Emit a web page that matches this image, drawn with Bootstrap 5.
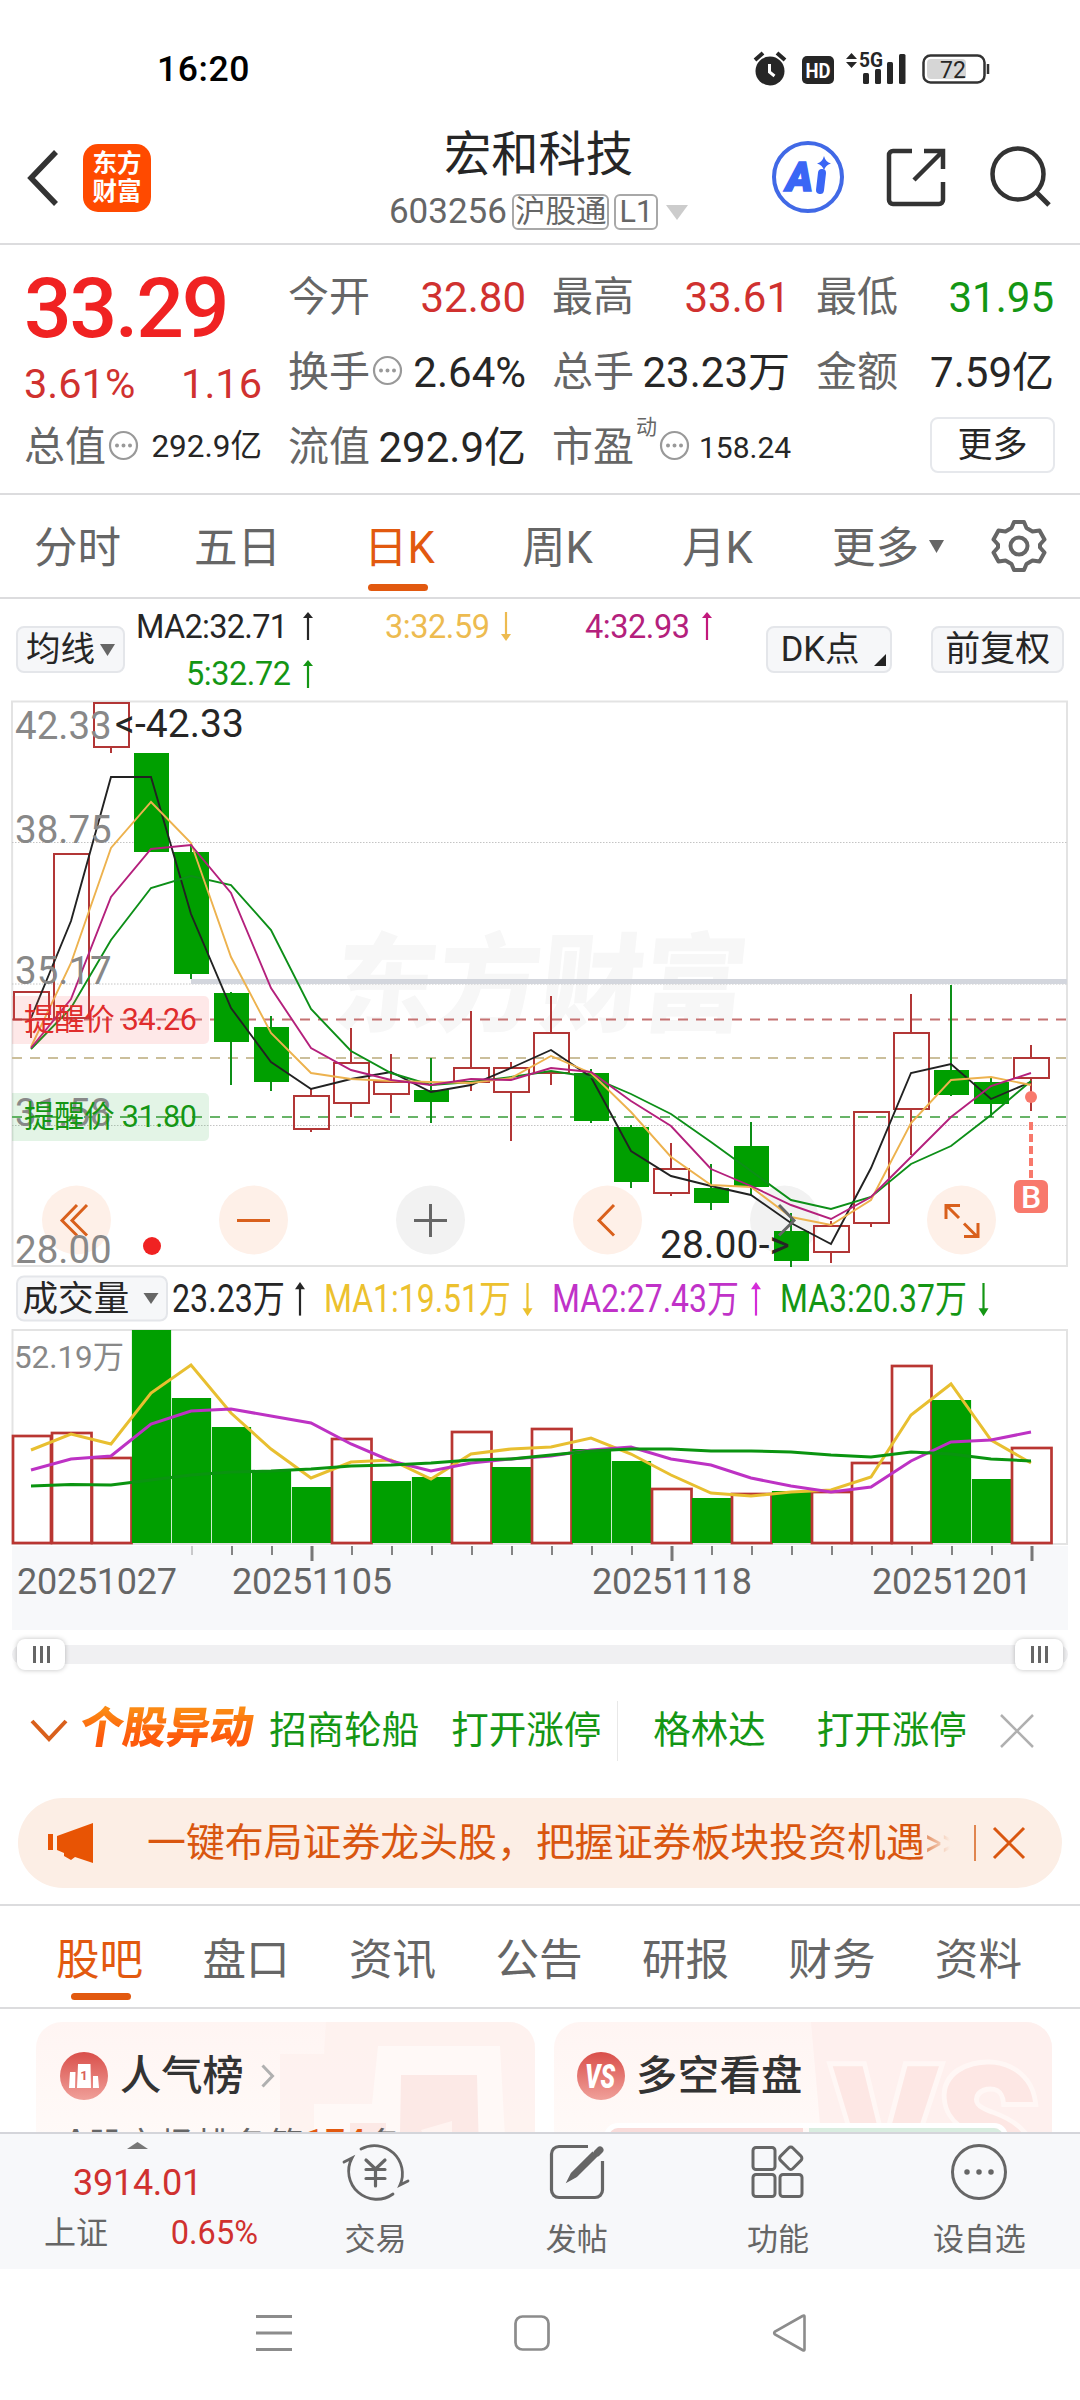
<!DOCTYPE html>
<html lang="zh-CN">
<head>
<meta charset="utf-8">
<meta name="viewport" content="width=1080">
<title>宏和科技 603256</title>
<link href="https://cdn.jsdelivr.net/npm/bootstrap@5.3.0/dist/css/bootstrap.min.css" rel="stylesheet">
<style>
body{width:1080px;height:2400px;margin:0;overflow:hidden;background:#fff;color:#262626;font-family:Roboto,"Noto Sans CJK SC",sans-serif;line-height:1;font-size:35px}
svg{display:block;flex:none;overflow:visible}
svg text{font-family:Roboto,"Noto Sans CJK SC",sans-serif}
.nw,.nw *{white-space:nowrap}
.up{color:#d0312f}.down{color:#149614}.dim{color:#666}.hot{color:#e2590f}
.statusbar{height:124px;padding:15px 92px 0 157px}
.clock{font-size:35.5px;font-weight:500;color:#000;letter-spacing:.6px}
.apphead{height:121px;border-bottom:2px solid #dcdcde;padding:0 29px 0 27px}
.brand{width:68px;height:68px;border-radius:15px;background:#ff4a00;color:#fff;font-weight:700;font-size:24.5px;line-height:28px;margin-left:24px;text-align:center;padding-top:6px}
.stockname{font-size:47.3px;line-height:56px;color:#262626}
.codeline{font-size:35px;line-height:38px;color:#666;height:38px}
.pilltag{border:2px solid #a8a8a8;border-radius:6px;font-size:30.5px;line-height:32px;height:36px;padding:0 1px;margin-left:5px}
.quote{height:250px;border-bottom:2px solid #dcdcde;padding:15px 24px 0}
.qgrid{display:grid;grid-template-columns:238px 238px 238px 238px;column-gap:26px;height:225px}
.cell{height:75px;font-size:42px}
.lbl{font-size:41px;color:#666}
.bigprice{font-size:84px;font-weight:500;color:#f02222;line-height:97px;height:97px;letter-spacing:-2.200px}
.morebtn{width:125px;height:56px;border:2px solid #e6e8ec;border-radius:8px;background:#fff;font-size:35px;color:#262626}
.periods{height:104px;border-bottom:2px solid #dcdcde;padding:0 34px 0 34px;font-size:43.5px;color:#666}
.periods .tabitem{position:relative;height:102px;padding-top:5px}
.bar{position:absolute;left:50%;bottom:6px;width:60px;height:7px;margin-left:-31px;border-radius:4px;background:#e2590f}
.legend{height:102px;padding:27px 16px 0 16px}
.tool{height:47px;border:2px solid #e4e6ea;border-radius:8px;background:#f6f7f9;font-size:34.5px;color:#262626}
.slider{height:39px;padding:9px 12px 0}
.track{height:31px;position:relative}
.track:before{content:"";position:absolute;left:0;right:0;top:6px;height:19px;border-radius:10px;background:#f0f0f2}
.knob{position:relative;width:48px;height:31px;background:#fff;border-radius:8px;box-shadow:0 0 5px rgba(0,0,0,.25)}
.knob i{width:3px;height:17px;background:#666}
.news{height:129px;padding:0 46px 6px 30px;font-size:37.5px}
.newslogo{font-size:43.5px;font-weight:900;transform:skewX(-9deg);background:linear-gradient(#fb8a14 15%,#fd5a0c 65%);-webkit-background-clip:text;color:transparent;line-height:54px;letter-spacing:-.2px}
.promo{height:90px;margin:0 18px;border-radius:45px;background:#fceee5;padding:0 32px 0 30px;color:#d9560f;font-size:38.9px}
.promotext{width:815px;margin-left:53px;line-height:60px}
.fadeout{background:linear-gradient(90deg,#e28b5c,#fceee5 85%);-webkit-background-clip:text;color:transparent;display:inline-block;transform:scaleX(.82);transform-origin:left;width:36px}
.sections{height:105px;margin-top:16px;border-top:2px solid #dcdcde;border-bottom:2px solid #dcdcde;padding:0 58px 0 56px;font-size:43.6px;color:#666}
.sections .tabitem{position:relative;height:101px;padding-top:8px}
.cards{height:123px;overflow:hidden;padding:13px 28px 0 36px;gap:19px}
.tile{height:170px;border-radius:26px;background:linear-gradient(#fff5f3,#fffaf8 70%);position:relative;overflow:hidden;flex:none;width:499px}
.tile>svg.art{position:absolute;left:0;top:0}
.tilehead{position:relative;height:108px;padding-left:24px;font-size:41.3px;font-weight:500;color:#333}
.tilehead span{padding-top:2px}
.rankline{position:relative;margin-top:-5px;padding-left:28px;font-size:35px;line-height:44px;color:#666;letter-spacing:1px}
.rankline b,.rankline span{position:relative;top:-4px;font-weight:500}
.battle{position:relative;height:20px;margin:-7px 44px 0 50px;border:5px solid #fff;border-radius:14px 14px 0 0;display:flex;gap:6px;overflow:hidden}
.bottombar{height:137px;background:#f7f8fa;border-top:2px solid #d4d5da;font-size:31px;color:#666}
.bottombar .act{width:201.3px;padding-top:9px}
.sysnav{height:131px;padding-bottom:3px}
</style>
<script src="https://cdn.jsdelivr.net/npm/bootstrap@5.3.0/dist/js/bootstrap.bundle.min.js"></script>
</head>
<body class="nw">

<div class="statusbar d-flex align-items-center justify-content-between">
  <span class="clock">16:20</span>
  <svg width="236" height="40" viewBox="752 50 236 40">
    <g fill="#262626">
      <circle cx="770" cy="71" r="14.5"/><path d="M755 60l8-7M785 60l-8-7" stroke="#262626" stroke-width="4" fill="none"/>
      <path d="M769.5 64v8l5 4" stroke="#fff" stroke-width="3" fill="none"/>
      <rect x="802" y="56" width="32" height="28" rx="5"/>
      <text x="818" y="78" font-size="20" font-weight="700" fill="#fff" text-anchor="middle" textLength="25" lengthAdjust="spacingAndGlyphs">HD</text>
      <path d="M846 59l5.5-6 5.5 6zM846 62l5.5 6 5.5-6z"/>
      <text x="859" y="67" font-size="19.5" font-weight="700" textLength="24" lengthAdjust="spacingAndGlyphs">5G</text>
      <rect x="863" y="73" width="6" height="11" rx="1.5"/><rect x="875" y="69" width="6" height="15" rx="1.5"/><rect x="887" y="62" width="6" height="22" rx="1.5"/><rect x="899" y="54" width="6.5" height="30" rx="1.5"/>
      <rect x="923.5" y="55.500" width="61" height="27" rx="7" fill="#fff" stroke="#333" stroke-width="2.500"/><rect x="927" y="59" width="39" height="20" rx="4" fill="#d6d6d6"/><path d="M988 64v10" stroke="#333" stroke-width="2.500"/>
      <text x="953" y="77.500" font-size="23" text-anchor="middle">72</text>
    </g>
  </svg>
</div>

<div class="apphead d-flex align-items-start position-relative">
  <div class="d-flex align-items-center" style="padding-top:20px">
    <svg width="32" height="56" viewBox="0 0 32 56"><path d="M29 2L4 28l25 26" fill="none" stroke="#333" stroke-width="5.500"/></svg>
    <div class="brand">东方<br>财富</div>
  </div>
  <div class="flex-grow-1 d-flex flex-column align-items-center" style="padding:3px 0 0 0;margin-left:155px">
    <div class="stockname">宏和科技</div>
    <div class="codeline d-flex align-items-center" style="margin-top:10px"><span>603256</span><span class="pilltag">沪股通</span><span class="pilltag" style="padding:0 3px">L1</span>
      <svg class="ms-2" width="22" height="15" viewBox="0 0 22 15"><path d="M0 0h22L11 15z" fill="#ccc"/></svg></div>
  </div>
  <svg width="280" height="76" viewBox="771 139 280 76" style="padding:0;margin-top:15px" fill="none">
    <circle cx="808" cy="177" r="34" stroke="#4169e6" stroke-width="4"/>
    <text x="786" y="191" font-size="40" font-weight="900" font-style="italic" fill="#3a66f5" textLength="27" lengthAdjust="spacingAndGlyphs" stroke="#3a66f5" stroke-width="1.500">A</text>
    <path d="M822 173l-2 17" stroke="#3a66f5" stroke-width="8" stroke-linecap="round"/>
    <path d="M824 156q1.500 6 7 7.500-5.500 1.500-7 7-1.500-5.500-7-7 5.500-1.500 7-7.500z" fill="#3a66f5"/>
    <path d="M912 151h-19a4 4 0 0 0-4 4v45a4 4 0 0 0 4 4h46a4 4 0 0 0 4-4v-18M924 151h19v18M943 151l-29 29" stroke="#333" stroke-width="4.500"/>
    <circle cx="1018" cy="174" r="25.500" stroke="#333" stroke-width="4.500"/><path d="M1036 192l13 13" stroke="#333" stroke-width="5"/>
  </svg>
</div>

<div class="quote">
  <div class="qgrid">
    <div>
      <div class="bigprice">33.29</div>
      <div class="up d-flex justify-content-between align-items-center" style="height:54px;font-size:41.500px"><span>3.61%</span><span>1.16</span></div>
      <div class="d-flex align-items-center" style="height:72px"><span class="lbl">总值</span><svg class="mb-1" style="margin-left:2px" width="31" height="31" viewBox="0 0 31 31"><use href="#more3"/></svg><span class="ms-auto" style="font-size:31.500px">292.9亿</span></div>
    </div>
    <div>
      <div class="cell d-flex align-items-center justify-content-between"><span class="lbl">今开</span><span class="up">32.80</span></div>
      <div class="cell d-flex align-items-center"><span class="lbl">换手</span><svg class="mb-1" style="margin-left:2px" width="31" height="31" viewBox="0 0 31 31"><use href="#more3"/></svg><span class="ms-auto">2.64%</span></div>
      <div class="cell d-flex align-items-center justify-content-between"><span class="lbl">流值</span><span>292.9亿</span></div>
    </div>
    <div>
      <div class="cell d-flex align-items-center justify-content-between"><span class="lbl">最高</span><span class="up">33.61</span></div>
      <div class="cell d-flex align-items-center justify-content-between"><span class="lbl">总手</span><span>23.23万</span></div>
      <div class="cell d-flex align-items-center"><span class="lbl">市盈</span><span class="dim align-self-start" style="font-size:21px;padding-top:7px;margin-left:2px">动</span><svg class="mb-1" style="margin-left:2px" width="31" height="31" viewBox="0 0 31 31"><use href="#more3"/></svg><span style="font-size:30px;margin-left:9px">158.24</span></div>
    </div>
    <div>
      <div class="cell d-flex align-items-center justify-content-between"><span class="lbl">最低</span><span class="down">31.95</span></div>
      <div class="cell d-flex align-items-center justify-content-between"><span class="lbl">金额</span><span>7.59亿</span></div>
      <div class="cell d-flex align-items-center justify-content-end"><button class="morebtn p-0" style="margin:-5px -1px 0 0">更多</button></div>
    </div>
  </div>
</div>

<div class="periods d-flex align-items-center">
  <div class="tabitem d-flex align-items-center" style="width:160px">分时</div>
  <div class="tabitem d-flex align-items-center" style="width:170px">五日</div>
  <div style="width:158px"><div class="tabitem hot d-inline-flex align-items-center">日K<span class="bar"></span></div></div>
  <div class="tabitem d-flex align-items-center" style="width:160px">周K</div>
  <div class="tabitem d-flex align-items-center" style="width:150px">月K</div>
  <div class="tabitem d-flex align-items-center flex-grow-1">更多<svg style="margin:-5px 0 0 10px" width="15" height="13" viewBox="0 0 15 13"><path d="M0 0h15L7.500 13z" fill="#666"/></svg></div>
  <svg width="54" height="54" viewBox="-27 -27 54 54" fill="none" stroke="#666" stroke-width="4"><path d="M-5 -24h10l2.500 6 6 3.500 7-1 5 9-4.500 5v3l4.500 5-5 9-7-1-6 3.500-2.500 6h-10l-2.500-6-6-3.500-7 1-5-9 4.500-5v-3l-4.500-5 5-9 7 1 6-3.500z" stroke-linejoin="round"/><circle r="8.500"/></svg>
</div>

<div class="legend d-flex">
  <button class="tool d-flex align-items-center p-0" style="width:109px;padding-left:8px!important">均线<svg style="margin-left:5px" width="15" height="12" viewBox="0 0 15 12"><path d="M0 0h15L7.500 12z" fill="#666"/></svg></button>
  <svg width="641" height="74" viewBox="125 626 641 74" font-size="32.500">
    <text x="136" y="637.500" fill="#262626" textLength="152">MA2:32.71</text><use href="#arrUp" x="308" y="612" color="#262626"/>
    <text x="385" y="637.500" fill="#edbb50" textLength="105">3:32.59</text><use href="#arrDn" x="506" y="612" color="#edbb50"/>
    <text x="585" y="637.500" fill="#b4207c" textLength="105">4:32.93</text><use href="#arrUp" x="707" y="612" color="#c2187c"/>
    <text x="186" y="685" fill="#149614" textLength="105">5:32.72</text><use href="#arrUp" x="308" y="660" color="#149614"/>
  </svg>
  <button class="tool p-0 d-flex align-items-center" style="width:127px;padding-left:13px!important">DK点<svg class="align-self-end" style="margin:0 0 5px 14px" width="12" height="12"><path d="M0 12L12 0v12z" fill="#222"/></svg></button>
  <button class="tool p-0" style="width:133px;margin-left:39px;font-size:35px">前复权</button>
</div>

<svg id="chart" width="1080" height="929" viewBox="0 701 1080 929">
  <defs>
    <g id="more3" fill="none" stroke="#999" stroke-width="2.200"><circle cx="15.500" cy="15.500" r="13.500"/><path d="M9 15.500h0M15.500 15.500h0M22 15.500h0" stroke-width="4" stroke-linecap="round"/></g>
    <g id="arrUp"><path d="M0 28V5" stroke="currentColor" stroke-width="2.200"/><path d="M-5 6L0 0l5 6z" fill="currentColor"/></g>
    <g id="arrDn"><path d="M0 0v23" stroke="currentColor" stroke-width="2.200"/><path d="M-5 22l5 7 5-7z" fill="currentColor"/></g>
  </defs>
  <text transform="translate(331 1023) skewX(-6)" font-size="107" font-weight="900" fill="#f7f7f7" textLength="412" lengthAdjust="spacingAndGlyphs">东方财富</text>
  <g fill="none" stroke="#e3e3e3" stroke-width="2"><path d="M12 701.500H1067V1266H12.500z"/><path d="M12.500 1330H1067V1544H12.500z"/></g>
  <path d="M12 842.500H1067M12 984H1067M12 1125.500H1067" stroke="#c4c4c4" stroke-dasharray="1.500 1.500"/>
  <path d="M191 981.500H1067" stroke="#d3d6dd" stroke-width="5"/>
  <g stroke-width="2" stroke-dasharray="10 8" fill="none"><path d="M12 1019.500H1067" stroke="#c57272"/><path d="M12 1058H1067" stroke="#cbbf9b"/><path d="M12 1117H1067" stroke="#68b468"/></g>
  <g fill="#fef0e8"><circle cx="76.500" cy="1220" r="34.500"/><circle cx="253.500" cy="1220" r="34.500"/><circle cx="607.500" cy="1220" r="34.500"/><circle cx="961.500" cy="1220" r="34.500"/></g>
  <g fill="#f2f2f2"><circle cx="430.500" cy="1220" r="34.500"/><circle cx="784.500" cy="1220" r="34.500"/></g>
  <g id="candles"></g>
  <g id="malines" fill="none" stroke-width="1.900"></g>
  <g fill="none" stroke="#d9601c" stroke-width="3"><path d="M77 1205l-15 15.500 15 15M87 1205l-15 15.500 15 15M237 1220.500h33M614 1205l-15 15.500 15 15M946 1219v-13.500h14M947 1206l12 12M964 1223.500l13 13M978 1223v13.500h-14"/></g>
  <g fill="none" stroke="#666" stroke-width="3"><path d="M414 1220.500h33M430.500 1204v33M779 1205l15 15.500-15 15"/></g>
  <circle cx="152" cy="1246" r="9" fill="#f02222"/>
  <path d="M12 996H204a5 5 0 0 1 5 5V1039a5 5 0 0 1-5 5H12z" fill="rgba(250,90,90,.14)"/>
  <path d="M12 1093H204a5 5 0 0 1 5 5V1136a5 5 0 0 1-5 5H12z" fill="rgba(40,170,60,.13)"/>
  <g font-size="38.500" fill="#888"><text x="15" y="739">42.33</text><text x="15" y="843">38.75</text><text x="15" y="984">35.17</text><text x="15" y="1126">31.58</text><text x="15" y="1263">28.00</text></g>
  <g font-size="39" fill="#262626"><text x="115" y="737" textLength="129">&lt;-42.33</text><text x="660" y="1258" textLength="130">28.00-&gt;</text></g>
  <g font-size="30.500"><text x="24" y="1030" fill="#e02c2c" textLength="173">提醒价 34.26</text><text x="24" y="1127" fill="#149614" textLength="173">提醒价 31.80</text></g>
  <g fill="#f8796c"><circle cx="1031" cy="1097" r="6"/><path d="M1031 1122v57" stroke="#f8796c" stroke-width="4" stroke-dasharray="8 4"/><rect x="1014" y="1180" width="34" height="33" rx="6"/></g>
  <text x="1031" y="1208" font-size="32" font-weight="500" fill="#fff" text-anchor="middle">B</text>

  <rect x="17" y="1276.500" width="150" height="44" rx="7" fill="#f6f7f9" stroke="#e4e6ea" stroke-width="2"/>
  <text x="22.500" y="1311" font-size="35.600" fill="#262626">成交量</text><path d="M143.500 1293h15l-7.500 11z" fill="#666"/>
  <g font-size="38"><text x="172" y="1312" fill="#262626" textLength="113" lengthAdjust="spacingAndGlyphs">23.23万</text><use href="#arrUp" transform="translate(300 1282) scale(1 1.200)" color="#262626"/>
  <text x="324" y="1312" fill="#ecc12e" textLength="187" lengthAdjust="spacingAndGlyphs">MA1:19.51万</text><use href="#arrDn" transform="translate(527.500 1283) scale(1 1.150)" color="#ecc12e"/>
  <text x="552" y="1312" fill="#c032c8" textLength="187" lengthAdjust="spacingAndGlyphs">MA2:27.43万</text><use href="#arrUp" transform="translate(756 1282) scale(1 1.200)" color="#d42cd8"/>
  <text x="780" y="1312" fill="#149614" textLength="187" lengthAdjust="spacingAndGlyphs">MA3:20.37万</text><use href="#arrDn" transform="translate(983.500 1283) scale(1 1.150)" color="#149614"/></g>
  <g id="volbars"></g>
  <g id="vollines" fill="none" stroke-width="3"></g>
  <text x="14" y="1368" font-size="32" fill="#888" textLength="110" lengthAdjust="spacingAndGlyphs">52.19万</text>
  <rect x="12" y="1546" width="1056" height="84" fill="#f7f8fa"/>
  <g id="ticks" stroke="#777"></g>
  <g font-size="36" fill="#666"><text x="17" y="1594" textLength="160">20251027</text><text x="232" y="1594" textLength="160">20251105</text><text x="592" y="1594" textLength="160">20251118</text><text x="872" y="1594" textLength="160">20251201</text></g>
</svg>

<div class="slider"><div class="track d-flex justify-content-between" style="padding:0 5px">
  <div class="knob d-flex align-items-center justify-content-center gap-1"><i></i><i></i><i></i></div>
  <div class="knob d-flex align-items-center justify-content-center gap-1"><i></i><i></i><i></i></div>
</div></div>

<div class="news d-flex align-items-center down">
  <svg width="38" height="24" viewBox="0 0 38 24"><path d="M2 2l17 18L36 2" fill="none" stroke="#d9601c" stroke-width="4"/></svg>
  <span class="newslogo" style="margin:-3px 0 0 12px">个股异动</span>
  <span style="margin-left:16px">招商轮船</span>
  <span style="margin-left:32px">打开涨停</span>
  <span style="width:1px;height:60px;background:#e8e8e8;margin:0 35px 0 16px"></span>
  <span>格林达</span>
  <span style="margin-left:51px">打开涨停</span>
  <svg class="ms-auto" width="34" height="34" viewBox="0 0 34 34"><path d="M1 1l32 32M33 1L1 33" stroke="#b0b0b0" stroke-width="2.500"/></svg>
</div>

<div class="promo d-flex align-items-center">
  <svg width="46" height="40" viewBox="48 1823 46 40" fill="#e85404"><path d="M48 1834h5v16h-5zM57 1836l36-13v40l-18-6-4 3-7-4v-3l-7-3z"/></svg>
  <div class="promotext">一键布局证券龙头股，把握证券板块投资机遇<span class="fadeout">&gt;&gt;</span></div>
  <span style="width:2px;height:36px;background:#e0854f;margin-left:12px"></span>
  <svg style="margin-left:17px" width="32" height="32" viewBox="0 0 32 32"><path d="M1 1l30 30M31 1L1 31" stroke="#d9560f" stroke-width="3"/></svg>
</div>

<div class="sections d-flex justify-content-between">
  <div class="tabitem d-flex align-items-center hot">股吧<span class="bar" style="margin-left:-29px;bottom:7px"></span></div>
  <div class="tabitem d-flex align-items-center">盘口</div><div class="tabitem d-flex align-items-center">资讯</div><div class="tabitem d-flex align-items-center">公告</div><div class="tabitem d-flex align-items-center">研报</div><div class="tabitem d-flex align-items-center">财务</div><div class="tabitem d-flex align-items-center">资料</div>
</div>

<div class="cards d-flex">
  <div class="tile">
    <svg class="art" width="499" height="170"><path d="M290 0H499V170H244V32H288z" fill="#fef0ed" opacity=".75"/><path d="M342 24H464L472 170H278V82H336z" fill="#fff9f7"/><path d="M365 53h76l3 117h-81zM314 101h36v69h-36z" fill="#fce9e6"/><path d="M385 108l31-9v30h-20z" fill="#fff4f1"/></svg>
    <div class="tilehead d-flex align-items-center">
      <svg width="48" height="48" viewBox="0 0 48 48"><defs><linearGradient id="rd" x2="0" y2="1"><stop stop-color="#d94f4a"/><stop offset="1" stop-color="#f0a09a"/></linearGradient></defs><circle cx="24" cy="24" r="24" fill="url(#rd)"/><path d="M10 20h5.500l-.5 16H9zM18 12h12.500l.5 24H17zM33 24h5l1 12h-6z" fill="#fff"/><text x="24" y="28" font-size="13" font-weight="700" fill="#d9605a" text-anchor="middle">1</text></svg>
      <span style="margin-left:12px">人气榜</span>
      <svg style="margin-left:17px" width="13" height="24" viewBox="0 0 13 24"><path d="M1.500 1.500L11.500 12l-10 10.500" fill="none" stroke="#b0b0b0" stroke-width="3"/></svg>
    </div>
    <div class="rankline"><span>A</span>股市场排名第<b class="hot">174</b>名</div>
  </div>
  <div class="tile" style="width:498px">
    <svg class="art" width="498" height="170"><path d="M257 0H498V170H272z" fill="#fef0ee"/><text transform="translate(285 165) skewX(8)" font-size="170" font-weight="900" font-style="italic" fill="#fde7e4" stroke="#fff7f5" stroke-width="10" paint-order="stroke" textLength="205" lengthAdjust="spacingAndGlyphs">VS</text></svg>
    <div class="tilehead d-flex align-items-center" style="padding-left:23px">
      <svg width="48" height="48" viewBox="0 0 48 48"><circle cx="24" cy="24" r="24" fill="url(#rd)"/><text x="23" y="36" font-size="33" font-weight="900" font-style="italic" fill="#fff" text-anchor="middle" textLength="30" lengthAdjust="spacingAndGlyphs">VS</text></svg>
      <span style="margin-left:11px;letter-spacing:.4px">多空看盘</span>
    </div>
    <div class="battle"><span style="width:194px;background:#f9dcda"></span><span class="flex-grow-1" style="background:#d9ede0"></span></div>
  </div>
</div>

<div class="bottombar d-flex">
  <div class="d-flex flex-column align-items-center up" style="width:275px;padding-top:8px">
    <svg width="21" height="7" viewBox="0 0 21 7"><path d="M0 7L10.500 0 21 7z" fill="#777"/></svg>
    <span style="font-size:36px;margin-top:15px;letter-spacing:-.3px;line-height:38px">3914.01</span>
    <div class="d-flex justify-content-between w-100" style="padding:11px 17px 0 44px;line-height:40px"><span class="dim" style="font-size:32px">上证</span><span style="font-size:32.500px">0.65%</span></div>
  </div>
  <div class="act d-flex flex-column align-items-center">
    <svg width="66" height="58" viewBox="343 2143 66 58" fill="none" stroke="#666" stroke-width="2.800" stroke-linecap="round"><path d="M361 2149a28 28 0 0 1 39 36l8-4M393 2194a28 28 0 0 1-41-36l-8 4"/><path d="M366 2160l9.500 9 9.500-9M366 2169.500h19M366 2178.500h19M375.500 2169v17" stroke-width="3.200"/></svg>
    <span class="mt-3" style="padding-top:7px">交易</span></div>
  <div class="act d-flex flex-column align-items-center">
    <svg width="56" height="58" viewBox="549 2143 56 58" fill="none" stroke="#666" stroke-width="3.200"><path d="M588 2146.500h-29a7.500 7.500 0 0 0-7.500 7.500v36a7.500 7.500 0 0 0 7.500 7.500h36a7.500 7.500 0 0 0 7.500-7.500v-29"/><path d="M597 2153l3-3" stroke-width="7" stroke-linecap="round"/><path d="M592.500 2152.500l4 4-20 20-9 5 4-8z" fill="#666" stroke-width="1.500"/></svg>
    <span class="mt-3" style="padding-top:7px">发帖</span></div>
  <div class="act d-flex flex-column align-items-center">
    <svg width="54" height="58" viewBox="752 2143 54 58" fill="none" stroke="#666" stroke-width="3"><rect x="754" y="2147.500" width="22" height="22" rx="3"/><rect x="754" y="2174.500" width="22" height="22" rx="3"/><rect x="781" y="2174.500" width="22" height="22" rx="3"/><rect x="783" y="2149.500" width="17.500" height="17.500" rx="3" transform="rotate(45 791.750 2158.250)"/></svg>
    <span class="mt-3" style="padding-top:7px">功能</span></div>
  <div class="act d-flex flex-column align-items-center">
    <svg width="58" height="58" viewBox="-29 -29 58 58" fill="none" stroke="#666" stroke-width="3"><circle r="26.500"/><path d="M-12 0h0M0 0h0M12 0h0" stroke-width="5.500" stroke-linecap="round"/></svg>
    <span class="mt-3" style="padding-top:7px">设自选</span></div>
</div>

<div class="sysnav d-flex align-items-center" style="padding-left:256px">
  <svg width="36" height="38" viewBox="0 0 36 38"><path d="M0 2.500h36M0 19h36M0 35.500h36" stroke="#8c8c8c" stroke-width="3"/></svg>
  <svg style="margin-left:222px" width="36" height="36" viewBox="0 0 36 36"><rect x="1.500" y="1.500" width="33" height="33" rx="7" fill="none" stroke="#8c8c8c" stroke-width="2.700"/></svg>
  <svg style="margin-left:222px" width="34" height="36" viewBox="0 0 34 36"><path d="M31 1.500v33q0 1.500-2 .5L1.500 19.500Q0 18 1.500 16.500L29 1q2-1 2 .5z" transform="translate(1.500 0)" fill="none" stroke="#8c8c8c" stroke-width="2.600"/></svg>
</div>

<script>
// One row per trading day: rising (1) or falling (0), body top and bottom, wick top and bottom, volume bar top.
const days=[[1,991,1019.5,991,1038,1435],[1,853,1018,853,1018,1432],[1,702,747,702,753,1457],[0,753,852,753,852,1330],[0,852,974,846,979,1398],[0,993,1042,992,1085,1427],[0,1027,1082,1016,1091,1470],[1,1095,1129,1088,1132,1487],[1,1062,1103,1028,1117,1438],[1,1081,1094,1054,1113,1481],[0,1090,1102,1058,1123,1477],[1,1067,1082,1011,1091,1431],[1,1067,1092,1062,1141,1467],[1,1032,1073,996,1085,1428],[0,1073,1121,1069,1123,1449],[0,1127,1182,1125,1188,1461],[1,1168,1193,1143,1196,1488],[0,1188,1203,1164,1210,1498],[0,1146,1187,1122,1195,1493],[0,1231,1261,1213,1267,1491],[1,1225,1252,1221,1263,1491],[1,1111,1223,1111,1227,1462],[1,1032,1109,994,1155,1365],[0,1070,1095,985,1096,1400],[0,1082,1104,1078,1117,1479],[1,1057,1078,1045,1111,1447]];
const volUp=[1,1,1,0,0,0,0,0,1,0,0,1,0,1,0,0,1,0,1,0,1,1,1,0,0,1];
const ma={'#222':[1018,921,777,777,914,1008,1062,1089,1079,1072,1092,1085,1068,1050,1077,1151,1176,1186,1195,1223,1244,1168,1073,1064,1099,1082],
'#0d8f18':[1049,1008,940,888,876,885,930,1009,1051,1073,1085,1082,1077,1071,1077,1094,1114,1142,1171,1200,1209,1197,1164,1146,1115,1081],
'#edb24e':[1047,963,848,802,843,957,1033,1073,1079,1081,1082,1083,1078,1056,1073,1112,1157,1185,1187,1217,1225,1200,1123,1080,1077,1085],
'#b4207c':[1048,999,897,849,845,893,988,1048,1070,1080,1085,1079,1080,1068,1072,1101,1126,1169,1186,1205,1219,1197,1157,1117,1086,1073]};
const vma={'#e8bf30':[1450,1434,1444,1393,1365,1413,1449,1478,1462,1460,1479,1454,1449,1447,1438,1454,1475,1493,1496,1492,1490,1477,1415,1384,1440,1463],
'#bd32c4':[1470,1459,1456,1424,1411,1409,1416,1423,1444,1461,1471,1463,1459,1456,1450,1447,1459,1465,1478,1486,1492,1487,1461,1442,1440,1432],
'#0a9410':[1486,1484.5,1485,1480,1475,1472,1471,1469,1466,1465,1463,1460,1459,1455,1451,1449,1449,1451,1451,1452,1455,1457,1452,1454,1459,1461]};
const X=i=>31+i*40;
let c='',v='',t='';
days.forEach((d,i)=>{const x=X(i),[u,a,b,w,z,vt]=d;
 if(u){c+=`<rect x="${x-17}" y="${a+1}" width="35" height="${b-a-1}" fill="none" stroke="#b23636" stroke-width="2"/>`;
  if(w<a)c+=`<path d="M${x} ${w}V${a}" stroke="#b23636" stroke-width="2"/>`;
  if(z>b)c+=`<path d="M${x} ${b}V${z}" stroke="#b23636" stroke-width="2"/>`;}
 else c+=`<path d="M${x} ${w}V${z}" stroke="#0d8f18" stroke-width="2"/><rect x="${x-17}" y="${a}" width="35" height="${b-a}" fill="#009f00"/>`;
 if(volUp[i])v+=`<rect x="${i?x-19:13}" y="${vt+1}" width="${i?39.5:38}" height="${1543-vt-1}" fill="#fff" stroke="#b93632" stroke-width="2.700"/>`;
 else v+=`<rect x="${x-19.1}" y="${vt}" width="39.200" height="${1543-vt}" fill="#009f00"/>`;
 if(i>3){const m=[7,16,25].includes(i);t+=`<path d="M${x+1} 1546v${m?15:9}" stroke-width="${m?3:1.8}"${i==4?' opacity=".4"':''}/>`;}
});
const lines=o=>Object.entries(o).map(([k,a])=>`<polyline stroke="${k}" points="${a.map((y,i)=>X(i)+','+y).join(' ')}"/>`).join('');
candles.innerHTML=c;volbars.innerHTML=v;ticks.innerHTML=t;malines.innerHTML=lines(ma);vollines.innerHTML=lines(vma);
</script>
</body>
</html>
